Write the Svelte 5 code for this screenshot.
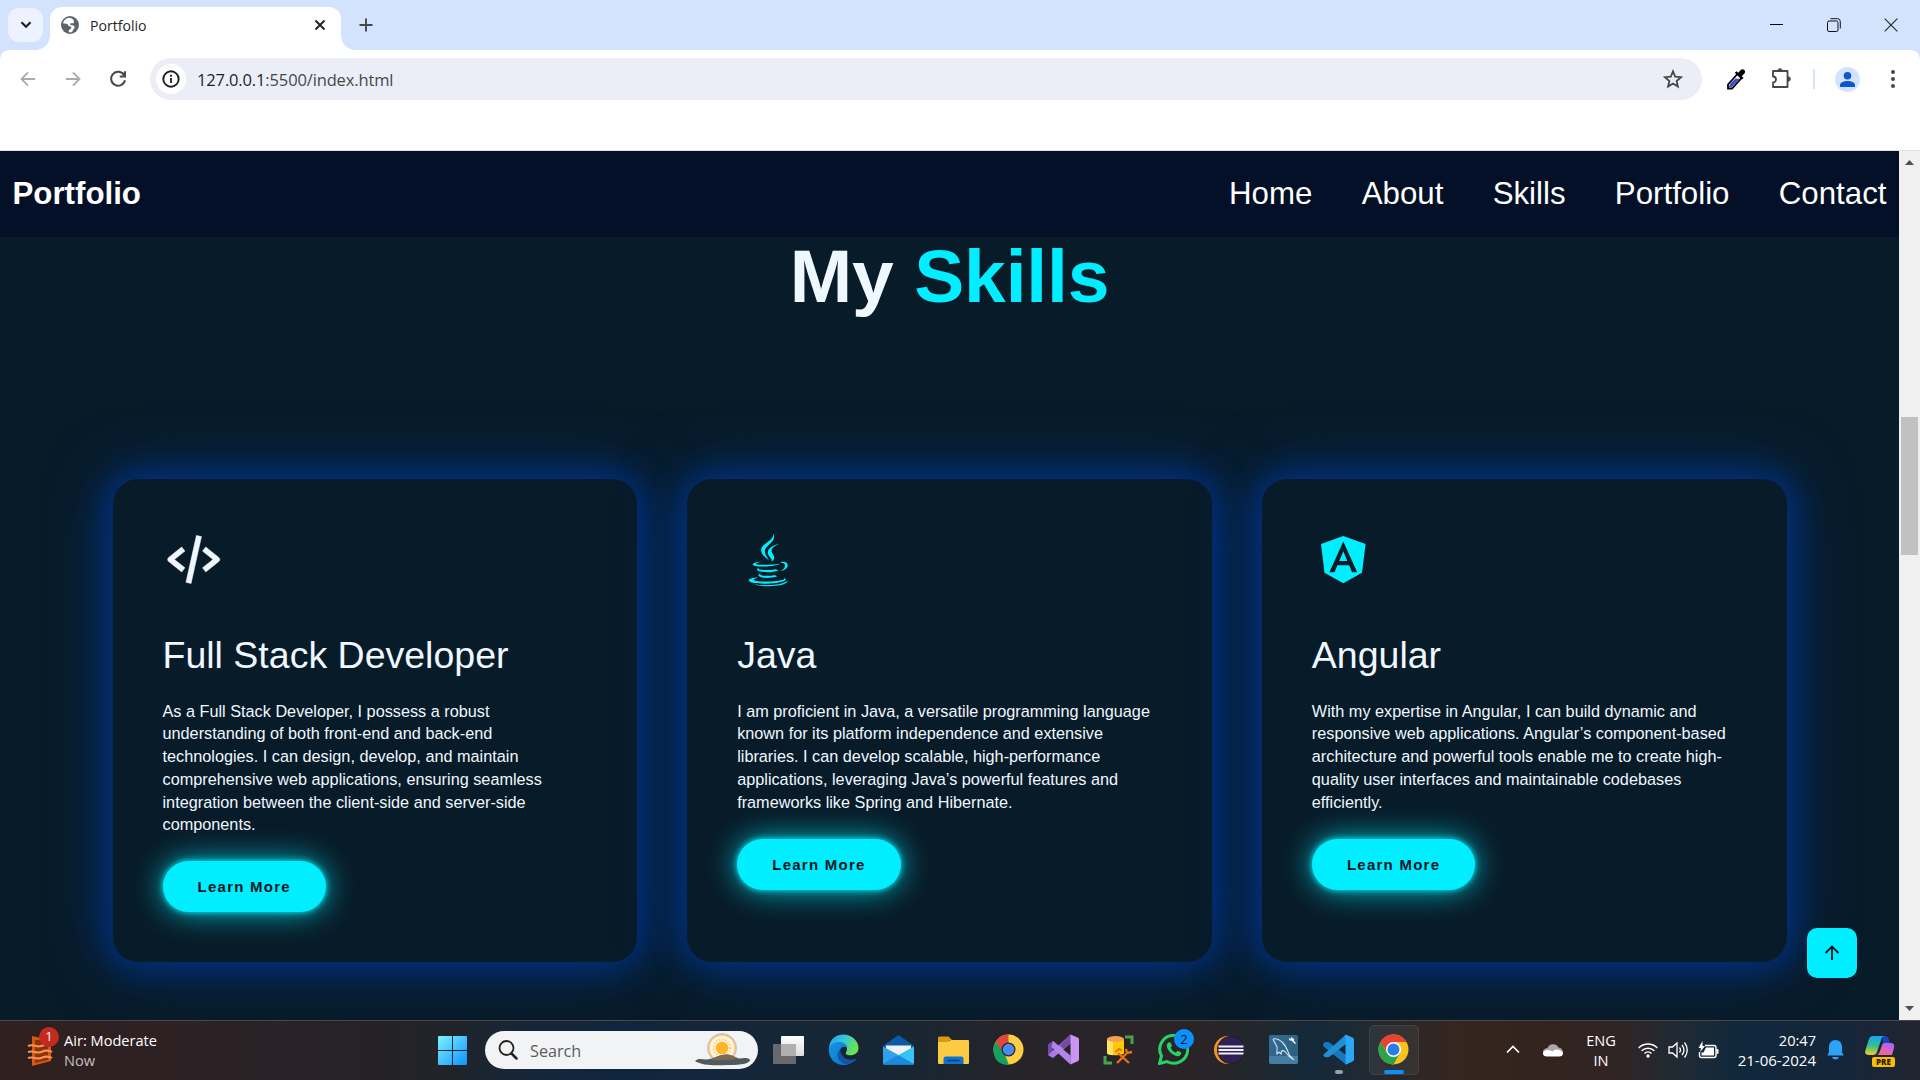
<script>
  const links = ['Home', 'About', 'Skills', 'Portfolio', 'Contact'];

  const cards = [
    {
      icon: 'code',
      title: 'Full Stack Developer',
      lines: [
        'As a Full Stack Developer, I possess a robust',
        'understanding of both front-end and back-end',
        'technologies. I can design, develop, and maintain',
        'comprehensive web applications, ensuring seamless',
        'integration between the client-side and server-side',
        'components.'
      ]
    },
    {
      icon: 'java',
      title: 'Java',
      lines: [
        'I am proficient in Java, a versatile programming language',
        'known for its platform independence and extensive',
        'libraries. I can develop scalable, high-performance',
        'applications, leveraging Java’s powerful features and',
        'frameworks like Spring and Hibernate.'
      ]
    },
    {
      icon: 'angular',
      title: 'Angular',
      lines: [
        'With my expertise in Angular, I can build dynamic and',
        'responsive web applications. Angular’s component-based',
        'architecture and powerful tools enable me to create high-',
        'quality user interfaces and maintainable codebases',
        'efficiently.'
      ]
    }
  ];
</script>

<div class="screen">
  <header class="tabs">
    <button class="tab-search" aria-label="Search tabs">
      <svg width="12" height="8" viewBox="0 0 12 8"><path d="M1.5 1.2 6 5.7l4.500-4.500" fill="none" stroke="#1f1f1f" stroke-width="2.200" /></svg>
    </button>
    <div class="tab">
      <svg class="globe" width="18" height="18" viewBox="0 0 18 18">
        <circle cx="9" cy="9" r="9" fill="#5f6368" />
        <path d="M8.200 1.800C5 2.200 2.600 4.300 1.900 7.200c1.600.5 3.100.3 4.200.8 1.300.6.9 2 2.200 2.300 1.200.3 2 .2 2 1.400 0 1.300-1.600 1.300-2.300 2.400-.4.8-.2 1.500.1 2.100 1 .2 2.100.1 3.200-.3.2-1.700 1-2.400 1.900-3.400.7-.9.5-2-.4-2.700-1-.7-2.100-.4-3.100-.9-.8-.5-.8-1.500.1-1.700 1.100-.3 2.300.6 3-.2.600-.8-.5-1.700.1-2.600-1.200-1.500-2.900-2.500-4.700-2.600Z" fill="#fff" />
        <path d="M2 9.500c1.400.4 2.600 1 3 2.300.3 1.200 1.200 1.500 1.300 2.700v1.200C3.800 14.500 2.200 12.300 2 9.500Z" fill="#5f6368" />
      </svg>
      <span class="tab-title">Portfolio</span>
      <svg width="12" height="12" viewBox="0 0 12 12"><path d="m1.500 1.500 9 9m0-9-9 9" stroke="#1f1f1f" stroke-width="1.900" /></svg>
    </div>
    <button class="new-tab" aria-label="New tab">
      <svg width="14" height="14" viewBox="0 0 14 14"><path d="M7 .5v13M.5 7h13" stroke="#474747" stroke-width="1.900" /></svg>
    </button>
    <div class="window-controls">
      <span><svg width="13" height="14" viewBox="0 0 13 14"><path d="M0 6.500h13" stroke="#000" /></svg></span>
      <span>
        <svg width="14" height="14" viewBox="0 0 14 14" fill="none" stroke="#111">
          <rect x=".5" y="3" width="10.500" height="10.500" rx="1.500" />
          <path d="M3.500.7h7q2.800 0 2.800 2.800v7" />
        </svg>
      </span>
      <span><svg width="14" height="14" viewBox="0 0 14 14"><path d="m.7.700 12.600 12.600m0-12.600L.7 13.300" stroke="#222" stroke-width="1.100" /></svg></span>
    </div>
  </header>

  <div class="toolbar">
    <div class="nav-icons">
      <svg width="16" height="16" viewBox="0 0 16 16" fill="none" stroke="#ababab" stroke-width="1.800"><path d="M15 8H2M8 1.300 1.500 8 8 14.700" /></svg>
      <svg width="16" height="16" viewBox="0 0 16 16" fill="none" stroke="#ababab" stroke-width="1.800"><path d="M1 8h13M8 1.300 14.500 8 8 14.700" /></svg>
      <svg width="18" height="18" viewBox="0 0 18 18" fill="none" stroke="#474747" stroke-width="2"><path d="M15.200 5.200A7 7 0 1 0 16 10.300M16 1.300v5.200h-5.300" /></svg>
    </div>
    <div class="address">
      <span class="info">
        <svg width="18" height="18" viewBox="0 0 18 18"><circle cx="9" cy="9" r="7.700" fill="none" stroke="#1f1f1f" stroke-width="1.900" /><path d="M9 8v5M9 4.800v1.900" stroke="#1f1f1f" stroke-width="1.800" /></svg>
      </span>
      <span class="url"><b>127.0.0.1</b>:5500/index.html</span>
      <svg width="20" height="20" viewBox="0 0 20 20"><path d="m10 2.400 2.200 5.300 5.800.5-4.400 3.800 1.300 5.600L10 14.600l-4.900 3 1.300-5.600L2 8.200l5.800-.5Z" fill="none" stroke="#474747" stroke-width="1.800" /></svg>
    </div>
    <div class="actions">
      <svg width="20" height="22" viewBox="0 0 20 22">
        <path d="M2 20.500v-4L11.500 6l4 4L6 20.500Z" fill="#fff" stroke="#000" stroke-width="1.800" />
        <path d="m4 16 5.500-5.500 4 .3L5.700 19H3Z" fill="#3949ce" />
        <path d="m8.800 4.700 1.700-1.500 1.700 1.500 2-2.200c1.500-1.700 3.200-1.500 4.200-.4s1 2.700-.5 4l-2.100 2.100 1.800 1.900-1.700 1.500Z" fill="#000" />
      </svg>
      <svg class="puzzle" width="22" height="22" viewBox="0 0 22 22">
        <path d="M3 3h14.500v16H3v-4.500a2.800 2.800 0 0 0 0-6Z" fill="none" stroke="#474747" stroke-width="1.800" stroke-linejoin="round" />
        <path d="M7.800 3a2.200 2.200 0 0 1 4.500 0M18 8.700a2.300 2.300 0 0 1 0 4.600" fill="#474747" stroke="#474747" />
      </svg>
      <i class="divider"></i>
      <span class="avatar"><svg width="25" height="25" viewBox="0 0 25 25" fill="#0b57d0"><circle cx="12.500" cy="8.700" r="3.800" /><path d="M5 20v-2.200c0-2.400 4.300-3.800 7.500-3.800s7.500 1.400 7.500 3.800V20Z" /></svg></span>
      <svg class="dots" width="4" height="18" viewBox="0 0 4 18" fill="#474747"><circle cx="2" cy="2" r="2" /><circle cx="2" cy="9" r="2" /><circle cx="2" cy="16" r="2" /></svg>
    </div>
  </div>

  <div class="viewport">
    <main class="page">
      <nav class="navbar">
        <strong>Portfolio</strong>
        <div class="links">
          {#each links as link}<span>{link}</span>{/each}
        </div>
      </nav>
      <h1>My <em>Skills</em></h1>
      <section class="cards">
        {#each cards as card}
          <article class="card">
            {#if card.icon === 'code'}
              <svg class="skill-icon" viewBox="0 0 24 24" fill="aliceblue">
                <path transform="translate(-.2 -.3)" stroke="aliceblue" stroke-width=".2" d="m7.375 16.781 1.250-1.562L4.601 12l4.024-3.219-1.250-1.562-5 4a1 1 0 0 0 0 1.562l5 4zm9.250-9.562-1.250 1.562L19.399 12l-4.024 3.219 1.250 1.562 5-4a1 1 0 0 0 0-1.562l-5-4zm-1.649-4.003-4 18-1.953-.434 4-18z" />
              </svg>
            {:else if card.icon === 'java'}
              <svg class="skill-icon" viewBox="0 0 62.500 62.500" fill="#00eeff">
                <path d="M36.600 4.500c1.700 5.600-1.300 8.400-4.500 11.200-3.300 2.900-4.900 5-4 8.200.6 2.500 2.500 4.700 3.800 7.400-3.700-3-7.600-5.900-7.800-9.900-.3-7 12.700-9.500 12.500-16.900Z" />
                <path d="M42.500 14.800c-4.800 1.900-8.100 4.400-7.900 7.400.2 2.600 2.600 3.500 2.700 6.100.1 1.800-1 3.300-2.500 4.500.7-3.600-4.200-5.400-4.100-9.300.1-4.400 5.600-7.200 11.800-8.700Z" />
                <path d="M24.500 32.700c-3.400.8-5.900 1.500-5.200 2.200 1.800 1.500 16.300 1.200 24.200-.5-4.200 2.600-12.100 3.100-18 3.100-5.700-.1-9.700-.8-9.700-2.100.1-1.600 4.500-2.700 8.700-2.700ZM44 33.100c4.100-.9 6.900.8 6.700 3.500-.3 3.200-3.800 5-7.600 5.600 3.100-1.600 5.100-3.500 4.900-5.800-.1-1.900-1.700-2.600-4-2.300Z" />
                <path d="M22.300 39.100c-1 .8-.8 1.200.7 1.500 3.600.9 12.200.5 16-.4l2.400 1.200c-4.700 2.100-14.900 2.200-19 .9-3.200-1.100-3.100-2.500-.1-3.200ZM24 44.600c-1.200.8-1 1.300.4 1.700 3.400.9 9.700.7 13-.4l2.900 1.300c-4.400 1.900-12.800 2.300-16.800.9-3-1.100-2.700-2.800.5-3.500Z" />
                <path d="M21.500 48.500c-3.100.8-5.900 1.800-4.500 2.700 5.200 2.400 25.100 1.400 29.800-.7.900-.4.600-.9-.3-1.400 2.500.4 3 1.500 1.200 2.600-5.700 3.200-26.400 3.900-33.200 1.800-4.900-1.500-3.300-5.100 7-5Z" />
                <path d="M17.500 55.200c9.800 1.900 26.600 1.400 33.200-3.400-.6 4.100-10.900 5.300-18.200 5.400-6.400.1-12.100-.7-15-2Z" />
              </svg>
            {:else}
              <svg class="skill-icon" viewBox="0 0 62.500 62.500" fill="#00eeff" fill-rule="evenodd">
                <path d="M31.300 7 53.600 14.900 50 43.700 31.300 54.200 12.500 43.700 9 14.900ZM31.300 12.600 17.400 43.200h5.200l2.800-7h11.800l2.800 7h5.200Zm0 9.600L35.400 32h-8.200Z" />
              </svg>
            {/if}
            <h2>{card.title}</h2>
            <p>{#each card.lines as line}<span>{line}</span>{/each}</p>
            <button class="more">Learn More</button>
          </article>
        {/each}
      </section>
      <button class="to-top" aria-label="Back to top">
        <svg width="16" height="16" viewBox="0 0 16 16" fill="none" stroke="#061a26" stroke-width="1.900"><path d="M8 15V2M1.500 8 8 1.500 14.500 8" /></svg>
      </button>
    </main>
    <aside class="scrollbar">
      <svg width="9" height="5" viewBox="0 0 9 5"><path d="M4.500 0 9 5H0Z" fill="#505050" /></svg>
      <div class="track"><i></i></div>
      <svg width="9" height="5" viewBox="0 0 9 5"><path d="M0 0h9L4.500 5Z" fill="#505050" /></svg>
    </aside>
  </div>

  <footer class="taskbar">
    <div class="weather">
      <span class="badge-host">
        <svg width="26" height="32" viewBox="0 0 26 32">
          <path d="M5 1 24 5v21L5 31Z" fill="#d35a12" />
          <path d="M8 5h13v20L8 28Z" fill="#8e3308" />
          <path d="M1 11c6-3 8 2 13 0s8-2 11-1M1 17c6-2 8 2 13 0s8-2 11 0M1 23c6-2 8 2 13 0s8-2 11 0" fill="none" stroke="#f7935a" stroke-width="2" />
        </svg>
        <b class="badge red">1</b>
      </span>
      <div class="weather-text"><span>Air: Moderate</span><span class="dim">Now</span></div>
    </div>

    <div class="apps">
      <span class="start">
        <svg width="29" height="29" viewBox="0 0 29 29">
          <defs><linearGradient id="win" gradientUnits="userSpaceOnUse" x1="0" y1="0" x2="29" y2="29"><stop offset="0" stop-color="#7df3ff" /><stop offset="1" stop-color="#0a93ff" /></linearGradient></defs>
          <path d="M1 0h13v14H0V1q0-1 1-1Zm14 0h13q1 0 1 1v13H15ZM0 15h14v14H1q-1 0-1-1Zm15 0h14v13q0 1-1 1H15Z" fill="url(#win)" />
        </svg>
      </span>
      <div class="search">
        <svg width="20" height="20" viewBox="0 0 20 20" fill="none" stroke="#222"><circle cx="8.500" cy="8" r="7" stroke-width="1.800" /><path d="m13.500 13.500 5 5" stroke-width="2.500" stroke-linecap="round" /></svg>
        <span>Search</span>
        <svg class="sunset" width="56" height="34" viewBox="0 0 56 34">
          <circle cx="27" cy="15" r="14.500" fill="#fdf1d8" stroke="#a9c8e8" stroke-width="1" />
          <circle cx="27" cy="15" r="13.300" fill="none" stroke="#f4ba72" stroke-width="1.400" />
          <circle cx="27" cy="15" r="8.300" fill="none" stroke="#f4c873" stroke-width="2" stroke-dasharray="1 2" />
          <circle cx="27" cy="15" r="6.300" fill="#ffb52b" />
          <path d="M0 28c3-3 7-2 11-1.500 7 0 12-5 21-5 6 .5 8 3 12 4 5-.5 10-1 11 1.500 0 3-7 5-22 5-15 .5-26 .5-33-4Z" fill="#4e5b5e" />
          <path d="M14 27c7-1 10-5.500 18-5.500 5 .5 8 3 12 4-10 2-20 2-30 1.500Z" fill="#7c6a58" />
        </svg>
      </div>
      <span class="app">
        <svg width="31" height="30" viewBox="0 0 31 30">
          <defs><linearGradient id="tv" x1="0" y1="0" x2="0" y2="1"><stop offset="0" stop-color="#fff" /><stop offset="1" stop-color="#dcdcdc" /></linearGradient></defs>
          <rect x="8" y="1" width="23" height="20" rx="1" fill="url(#tv)" />
          <rect x="0" y="9" width="23" height="20" rx="1" fill="#666a6e" />
          <path d="M8 9h15v12H8Z" fill="#aeb0b2" />
        </svg>
      </span>
      <span class="app">
        <svg width="31" height="31" viewBox="0 0 31 31">
          <defs>
            <linearGradient id="edge-a" x1="0" y1="0" x2="1" y2=".4"><stop offset="0" stop-color="#2699e8" /><stop offset=".5" stop-color="#35c5df" /><stop offset="1" stop-color="#6be34f" /></linearGradient>
            <linearGradient id="edge-b" x1="0" y1="0" x2="1" y2="1"><stop offset="0" stop-color="#1597e3" /><stop offset="1" stop-color="#0870c5" /></linearGradient>
          </defs>
          <path d="M1 13C2 5 8 .5 15.500.5 24 .5 30.500 7 30.500 14c0 5-4 7.300-8 7.300-4.500 0-5.500-1.700-4.200-3.500 2.500-4-1.300-7.500-5.300-7.500C7 10 3 13 1 18Z" fill="url(#edge-a)" />
          <path d="M.8 14C3 9 8 7.500 12.500 8c4 .5 7 3.200 7 6.500 0-2-6.500-3.500-7.500 2-1 6 4 14 12.500 11.500-3 2.500-6.500 3-9 3C6 31 0 23 .8 14Z" fill="url(#edge-b)" />
          <path d="M12.300 14.700c-7 7 0 17 8.700 15.300 3.700-.8 6.500-3 8-5.700-5 2.500-11 1.700-14-1.800-2-2.400-3-5-2.700-7.800Z" fill="#1355a4" />
        </svg>
      </span>
      <span class="app">
        <svg width="31" height="30" viewBox="0 0 31 30">
          <path d="M0 11 14 1q1.500-1 3 0l14 10v8H0Z" fill="#0c5ba8" />
          <path d="M3 10.500h25v9L15.500 22 3 19Z" fill="#f0f2f5" />
          <path d="M0 11.500 15.500 20 0 29.500Z" fill="#2fa3ea" />
          <path d="M31 11.500V28q0 1.500-1.500 1.500H1L15.500 20Z" fill="#39c2f7" />
          <path d="M15.500 20 31 29q-.5.500-1.500.5H1Q0 29.500 0 29Z" fill="#168cdd" />
        </svg>
      </span>
      <span class="app">
        <svg width="31" height="28" viewBox="0 0 31 28">
          <path d="M0 2Q0 .5 1.500.5h9L14 4h-2L9 7H0Z" fill="#dc9a08" />
          <path d="M0 6h9l4-2h17q1 0 1 1v22q0 1-1 1H1q-1 0-1-1Z" fill="#fcca43" />
          <path d="M5.500 28v-5q0-2.500 2.500-2.500h15q2.500 0 2.500 2.500v5Z" fill="#1272c9" />
          <path d="M10 24.500h11" stroke="#093f87" stroke-width="1.500" stroke-linecap="round" />
        </svg>
      </span>
      {@render chrome(true)}
      <span class="app">
        <svg width="31" height="31" viewBox="0 0 31 31">
          <path d="m0 10.500 5-3.500v17l-5-3Z" fill="#61409a" />
          <path d="M5 7 22.500 23v7.500L3 12Z" fill="#7d52b4" />
          <path d="m22.500.500v9L5 24l-5-3Z" fill="#a87be0" />
          <path d="m0 10.500 5-3.500 6 5.500-4 3.500-3-2.500v4L0 21Z" fill="#754aa9" />
          <path d="m5 7 17.500 14.500v9L3.500 13Z" fill="#b084e8" />
          <path d="m22.500.500-11 11 4 3.300 7-5.300Z" fill="#7449a8" />
          <path d="m22.500.500 7 3q1.500.7 1.500 2v19.800q0 1.300-1.500 2l-7 3.200Z" fill="#cb95f5" />
        </svg>
      </span>
      <span class="app">
        <svg width="31" height="30" viewBox="0 0 31 30">
          <path d="M4 4v14c0 3 17 3 17 0V4Z" fill="#fdc900" /><path d="M4 4v14c0 1.500 3 2 6 2.200V4Z" fill="#ffe369" />
          <ellipse cx="12.500" cy="4" rx="8.500" ry="3" fill="#f2a14e" />
          <path d="M22 2h7v7M2 21v7h7" fill="none" stroke="#46a548" stroke-width="3" />
          <path d="m14 28 11-11m-10 1 11 10M12.500 17l3.500-3 3 1.500M23 14l1 4 5-1" fill="none" stroke="#ec720e" stroke-width="2.300" />
        </svg>
      </span>
      <span class="app badge-host">
        <svg width="31" height="31" viewBox="0 0 31 31">
          <path d="m1.500 29.500 2-7.500A14 14 0 1 1 9 27.500Z" fill="none" stroke="#24d366" stroke-width="3" />
          <path d="M10.500 8.500c1-.5 2-.2 2.300.6l1 2.400c.4 1-1.300 1.800-1 2.400 1 2.200 2.500 3.700 4.700 4.600.9.400 1.600-2 2.600-1.600l2.500 1.200c1 .5.600 2.300-.3 3.200-2 2-6.300.5-9.300-2.300C9.300 15.500 7 10.500 10.500 8.500Z" fill="#24d366" />
        </svg>
        <b class="badge blue">2</b>
      </span>
      <span class="app">
        <svg width="30" height="30" viewBox="0 0 30 30">
          <circle cx="14" cy="15" r="14" fill="#f7941e" /><circle cx="17" cy="15" r="14" fill="#251a20" />
          <circle cx="17" cy="15" r="13" fill="#2c2255" />
          <path d="M4.500 11.500h25M4.500 15h25M4.500 18.500h25" stroke="#f1effa" stroke-width="2" />
        </svg>
      </span>
      <span class="app">
        <svg width="29" height="29" viewBox="0 0 29 29">
          <defs><linearGradient id="sql" x1="0" y1="0" x2="1" y2="1"><stop offset="0" stop-color="#326e95" /><stop offset="1" stop-color="#285c7c" /></linearGradient></defs>
          <rect width="29" height="29" rx="2" fill="url(#sql)" /><path d="M0 21h29v6q0 2-2 2H2q-2 0-2-2Z" fill="#447ea1" />
          <path d="M4 4c4-1 7 1 10 4 4 4 5 10 7 13l4 4M4 4c1 3 3 5 4 8 1 2-1 4 0 7l2-2 2 2c0-4 3-5 6 0 2 3 4 4 7 6" fill="none" stroke="#d3e6ef" stroke-width="1.100" />
          <path d="m20 3 2 1v-2l3 2v2l2 2-1 1-3-3-3-1Z" fill="#f4f7fa" />
        </svg>
      </span>
      <span class="app">
        <svg width="31" height="31" viewBox="0 0 31 31">
          <path d="M0 10 2 8l4 .2L23 21v9.500L.5 12.500Z" fill="#1679bd" />
          <path d="M0 21 23 .5V10L6 23l-4 .2L0 21Z" fill="#218fd5" />
          <path d="m22.500.500 7 3q1.500.7 1.500 2v20q0 1.300-1.500 2l-7 3.200Z" fill="#2ba8f4" />
        </svg>
        <i class="running"></i>
      </span>
      {@render chrome(false)}
    </div>

    <div class="tray">
      <span class="w40"><svg width="14" height="9" viewBox="0 0 14 9"><path d="m1 7.500 6-6 6 6" fill="none" stroke="#fff" stroke-width="1.700" /></svg></span>
      <span class="w40">
        <svg width="20" height="14" viewBox="0 0 20 14"><path d="M4.500 5A6 6 0 0 1 15.500 4.500 4.700 4.700 0 0 1 19 12H3Q0 11 0 8.500T4.500 5Z" fill="#aaa6a5" /><path d="M4 13.500Q0 13.500 0 10.500T4 7q3-.5 5.500 1.500Q12 5.500 16 7q4 1 4 4-.5 2.500-4 2.500Z" fill="#fff" /></svg>
      </span>
      <div class="lang"><span>ENG</span><span>IN</span></div>
      <span class="w30">
        <svg width="20" height="16" viewBox="0 0 20 16" fill="none" stroke="#fff" stroke-width="1.500"><path d="M.7 6a13 13 0 0 1 18.600 0M3.600 8.800a9 9 0 0 1 12.800 0M6.500 11.500a5 5 0 0 1 7 0" /><circle cx="10" cy="14" r="1.700" fill="#fff" stroke="none" /></svg>
      </span>
      <span class="w30">
        <svg width="20" height="18" viewBox="0 0 20 18" fill="none" stroke="#fff" stroke-width="1.300"><path d="M1 6h3.500L9 2v14l-4.500-4H1Zm10.500.5q2 2.500 0 5M14 4q4 5 0 10M16.500 1.500q5.500 7.500 0 15" /></svg>
      </span>
      <span class="w30">
        <svg width="21" height="18" viewBox="0 0 21 18"><path d="M7 4.500h9q2 0 2 2v8q0 2-2 2H3.500q-2 0-2-2V11" fill="none" stroke="#fff" stroke-width="1.400" /><path d="M8 6.500h8v8H3.500v-3h2ZM18.500 8h1q1 0 1 1v3q0 1-1 1h-1ZM4.500 0 .5 7H3L2 11l5-6H4.500Z" fill="#fff" /></svg>
      </span>
      <div class="clock"><span>20:47</span><span>21-06-2024</span></div>
      <span class="bell"><svg width="17" height="20" viewBox="0 0 17 20" fill="#2ea2f8"><path d="M8.500 0C4.500 0 2 3 2 7v5L.3 15.500h16.400L15 12V7c0-4-2.500-7-6.500-7ZM5 17h7q-.8 2.500-3.500 2.500T5 17Z" /></svg></span>
      <span class="copilot">
        <svg width="30" height="30" viewBox="0 0 30 30">
          <defs>
            <linearGradient id="co-a" x1=".4" y1="0" x2=".3" y2="1"><stop offset="0" stop-color="#17a7f3" /><stop offset=".5" stop-color="#31be91" /><stop offset="1" stop-color="#f4cf1e" /></linearGradient>
            <linearGradient id="co-b" x1=".7" y1="0" x2=".2" y2="1"><stop offset="0" stop-color="#b060fa" /><stop offset="1" stop-color="#fb6a84" /></linearGradient>
          </defs>
          <path d="M18 1h2q3 0 4 4l1 3-7 2Z" fill="#1944c4" />
          <path d="M8 1h12q-3 0-4 4l-4 12q-1 3-4 3H4q-5 0-3.500-5L4 4q1-3 4-3Z" fill="url(#co-a)" />
          <path d="M20 8h6q4 0 3 5l-2 7H12q2-1 3-4l2-6q1-2 3-2Z" fill="url(#co-b)" />
        </svg>
        <b>PRE</b>
      </span>
    </div>
  </footer>
</div>

{#snippet chrome(rotated)}
  <span class="app" class:active={!rotated}>
    {#if rotated}
      <svg width="31" height="31" viewBox="0 0 31 31">
        <circle cx="15.500" cy="15.500" r="15" fill="#ffce44" />
        <path d="m3 7.200 8 11L16 31Q.5 31 .5 15.500.5 11 3 7.200Z" fill="#17a05e" />
        <path d="M15.500.5V9L8 16 3 7.200Q7 .5 15.500.5Z" fill="#de493c" />
        <circle cx="15.500" cy="15.500" r="7" fill="#202b31" /><circle cx="15.500" cy="15.500" r="5.700" fill="#4d8af0" />
      </svg>
    {:else}
      <svg width="31" height="31" viewBox="0 0 31 31">
        <circle cx="15.500" cy="15.500" r="15" fill="#fcc31e" />
        <path d="M2.500 8a15 15 0 0 1 26 0h-13l-6 11Z" fill="#e94235" />
        <path d="M2.500 8a15 15 0 0 0 13 22.500L22 19l-12 1Z" fill="#2ba24c" />
        <circle cx="15.500" cy="15.500" r="7.500" fill="#fff" /><circle cx="15.500" cy="15.500" r="6" fill="#2a7bea" />
      </svg>
      <i class="running wide"></i>
    {/if}
  </span>
{/snippet}

<style>
  :global(body) { margin: 0; overflow: hidden; }
  * { box-sizing: border-box; }
  svg { display: block; flex: none; }
  button { border: 0; padding: 0; }

  .screen { width: 1920px; height: 1080px; display: flex; flex-direction: column; overflow: hidden; background: #fff; font-family: 'Liberation Sans', Arial, sans-serif; }

  /* Browser chrome */
  .tabs { height: 50px; background: #d3e3fd; display: flex; align-items: flex-start; padding-left: 8px; }
  .tab-search { width: 35px; height: 34px; margin-top: 8px; border-radius: 11px; background: #ecf2fe; display: grid; place-items: center; }
  .tab { position: relative; width: 291px; height: 43px; margin: 7px 0 0 7px; padding: 0 15px 7px 11px; border-radius: 12px 12px 0 0; background: #fff; display: flex; align-items: center; }
  .tab::before, .tab::after { content: ''; position: absolute; bottom: 0; width: 14px; height: 14px; }
  .tab::before { left: -14px; background: radial-gradient(circle at 0 0, transparent 13.500px, #fff 14px); }
  .tab::after { right: -14px; background: radial-gradient(circle at 100% 0, transparent 13.500px, #fff 14px); }
  .tab-title { flex: 1; margin-left: 11px; font: 14.100px 'Open Sans', sans-serif; color: #1f1f1f; }
  .new-tab { width: 49px; height: 50px; background: none; display: grid; place-items: center; }
  .window-controls { margin-left: auto; height: 49px; padding-right: 1px; display: flex; }
  .window-controls span { width: 57px; display: grid; place-items: center; }

  .toolbar { position: relative; height: 101px; padding-top: 8px; display: flex; align-items: flex-start; background: #fff; border-bottom: 1px solid #dfe1e5; }
  .toolbar::before, .toolbar::after { content: ''; position: absolute; top: 0; width: 9px; height: 9px; }
  .toolbar::before { left: 0; background: radial-gradient(circle at 100% 100%, transparent 8.500px, #d3e3fd 9px); }
  .toolbar::after { right: 0; background: radial-gradient(circle at 0 100%, transparent 8.500px, #d3e3fd 9px); }
  .nav-icons { width: 150px; height: 42px; padding-left: 20px; display: flex; align-items: center; gap: 28.500px; }
  .address { width: 1552px; height: 42px; border-radius: 21px; background: #eceef7; padding: 0 19.500px 0 6px; display: flex; align-items: center; }
  .info { width: 30px; height: 30px; border-radius: 50%; background: #fff; display: grid; place-items: center; }
  .url { flex: 1; margin-left: 11px; font: 16.500px 'Open Sans', sans-serif; color: #474747; letter-spacing: -.140px; }
  .url b { font-weight: 400; color: #1f1f1f; }
  .actions { flex: 1; height: 42px; display: flex; align-items: center; padding-left: 24px; }
  .puzzle { margin-left: 24px; }
  .divider { width: 2px; height: 20px; margin-left: 21px; background: #d3e3fd; }
  .avatar { width: 25px; height: 25px; margin-left: 20px; border-radius: 50%; background: #d3e3fd; }
  .dots { margin-left: 31px; }

  /* Portfolio page */
  .viewport { height: 869px; display: flex; }
  .page { position: relative; width: 1899px; background: #081b29; overflow: hidden; }
  .navbar { height: 86px; padding: 0 12.500px; background: #031027; display: flex; align-items: center; justify-content: space-between; color: #fff; font-size: 31.250px; }
  .links { display: flex; gap: 49.300px; }
  h1 { margin: 2px 0 165px; text-align: center; font-size: 75px; line-height: 75px; letter-spacing: -.150px; color: aliceblue; }
  h1 em { font-style: normal; color: #00eeff; }
  .cards { display: grid; grid-template-columns: repeat(3, 1fr); gap: 50px; padding: 0 112.500px 0 112.500px; height: 483px; }
  .card { border-radius: 25px; padding: 50px; background: #081b29; box-shadow: 0 0 31px 5px #022f80, 0 0 62px 5px #04356ecc; color: aliceblue; }
  .skill-icon { width: 62.500px; height: 62.500px; }
  h2 { margin: 42px 0 23px; font-size: 37.500px; line-height: 43px; font-weight: 400; white-space: nowrap; }
  p { margin: 0 0 25.400px; font-size: 16.250px; line-height: 22.750px; white-space: nowrap; }
  p span { display: block; }
  .more { display: block; width: 163.500px; height: 51px; border-radius: 26px; background: #00eeff; box-shadow: 0 0 6px #00eeff, 0 0 31px #00c4cf; font: bold 15px 'Liberation Sans', Arial, sans-serif; letter-spacing: 1.250px; color: #061622; }
  .to-top { position: absolute; left: 1807px; top: 777px; width: 50px; height: 50px; border-radius: 10px; background: #00eeff; display: grid; place-items: center; }

  .scrollbar { width: 21px; background: #f0f0f0; display: flex; flex-direction: column; align-items: center; padding: 9px 0 9px; }
  .track { flex: 1; width: 17px; padding-top: 252px; }
  .track i { display: block; height: 138px; background: #c1c1c1; }

  /* Taskbar */
  .taskbar { height: 60px; border-top: 1px solid #4b4648; display: flex; align-items: stretch; color: #fff; font-family: 'Open Sans', sans-serif;
    background: linear-gradient(90deg, #30201f 0, #2d2124 170px, #252227 380px, #202429 450px, #14263a 540px, #10253e 620px, #14263a 730px, #162635 840px, #192632 920px, #252429 1010px, #29242a 1110px, #2b2427 1190px, #20282e 1260px, #132839 1310px, #1d2934 1355px, #35261f 1450px, #33231e 1550px, #2f2525 1620px, #202a34 1680px, #11283c 1735px, #14263a 1840px, #222530 1920px); }
  .weather { width: 424px; padding-left: 27px; display: flex; align-items: center; }
  .badge-host { position: relative; }
  .badge { position: absolute; width: 20px; height: 20px; border-radius: 50%; display: grid; place-items: center; font-size: 13px; font-weight: 400; line-height: 1; }
  .weather .badge { left: 12px; top: -8px; }
  .red { background: #c42b20; color: #fff; }
  .blue { right: 7px; top: 8px; background: #0a90ff; color: #0a1a26; }
  .weather-text { margin: -1px 0 0 11px; display: flex; flex-direction: column; font-size: 14.600px; line-height: 20px; }
  .dim { color: #c5c0c0; }
  .apps { display: flex; }
  .start { width: 61px; padding-left: 14px; display: flex; align-items: center; }
  .search { width: 273px; height: 38px; margin: 10px 3px 0 0; padding: 0 7px 0 13px; border-radius: 19px; background: #f2f3f5; display: flex; align-items: center; color: #5b5b5b; font-size: 16.200px; }
  .search span { margin: 1px 0 0 12px; }
  .sunset { margin-left: auto; }
  .app { position: relative; width: 55px; display: grid; place-items: center; padding-bottom: 2px; }
  .active::before { content: ''; position: absolute; inset: 4px 2px 5px 3px; border: 1px solid #ffffff14; border-radius: 5px; background: #ffffff0e; }
  .active svg { position: relative; }
  .running { position: absolute; bottom: 6px; width: 8px; height: 4px; border-radius: 2px; background: #9a9da2; }
  .wide { width: 20px; background: #0a90ff; }
  .tray { margin-left: auto; display: flex; padding: 0 14px 2px 0; }
  .tray > span { display: grid; place-items: center; }
  .w40 { width: 40px; }
  .w30 { width: 30px; }
  .lang, .clock { display: flex; flex-direction: column; justify-content: center; font-size: 14.600px; line-height: 20px; }
  .lang { width: 56px; margin-right: 4px; align-items: center; }
  .clock { width: 93px; align-items: flex-end; white-space: nowrap; }
  .clock span:last-child { font-size: 15px; }
  .bell { width: 38px; }
  .copilot { width: 52px; position: relative; }
  .copilot b { position: absolute; right: 11px; bottom: 11px; width: 23px; height: 10px; border-radius: 2px; background: #fdbd02; color: #2a1d00; font-size: 8px; font-weight: 800; line-height: 10px; text-align: center; }
</style>
